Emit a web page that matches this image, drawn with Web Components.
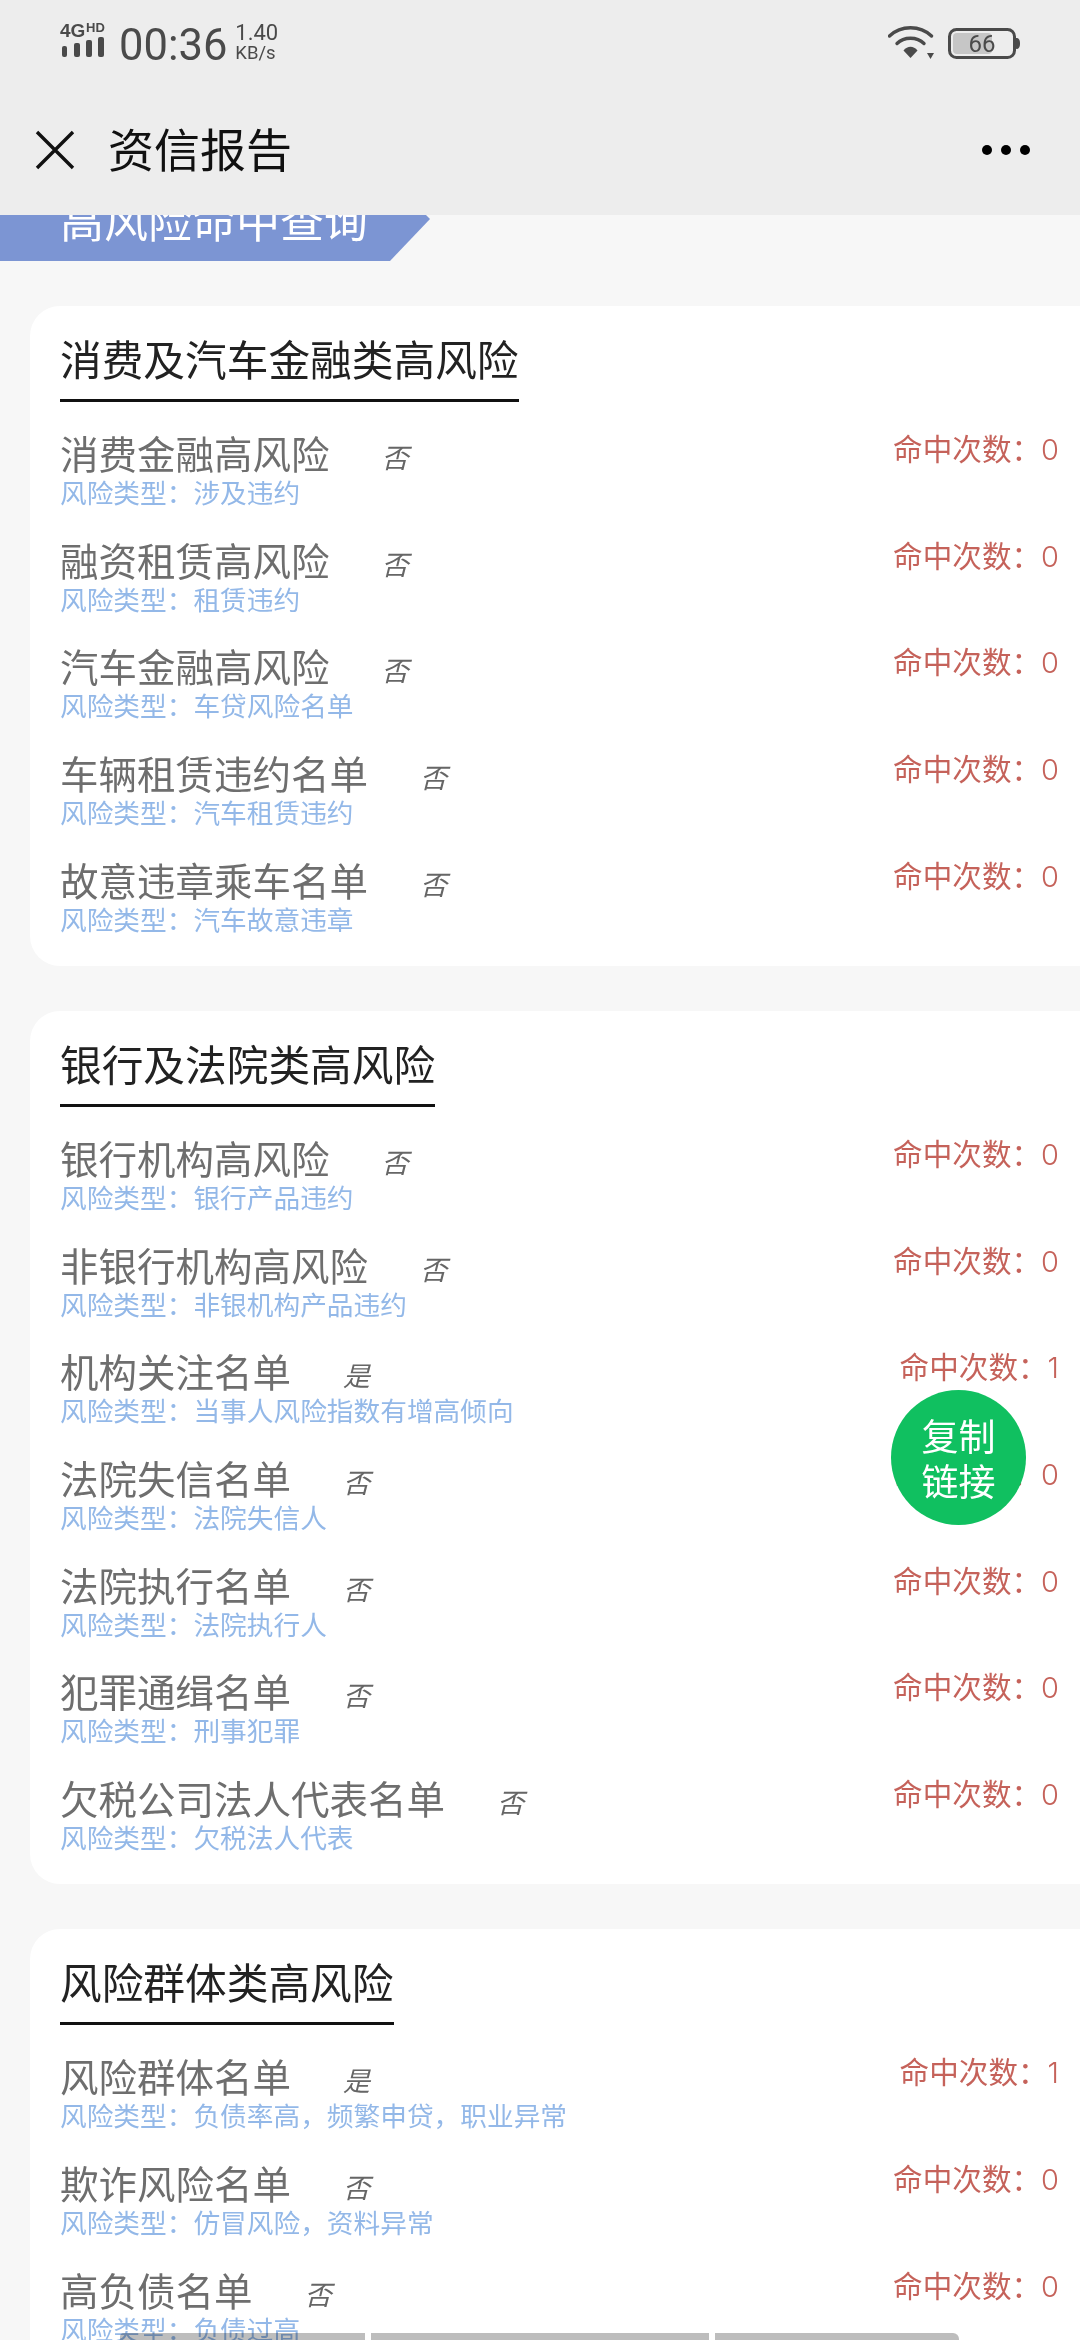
<!DOCTYPE html>
<html lang="zh">
<head>
<meta charset="utf-8">
<title>资信报告</title>
<style>
  html, body { margin: 0; padding: 0; height: 2340px; overflow: hidden; background: #f7f7f7; }
  body { font-family: "Noto Sans CJK SC", "Liberation Sans", sans-serif; position: relative; }
</style>
</head>
<body>
<app-header></app-header>
<report-page>
  <section-ribbon slot="ribbon">高风险命中查询</section-ribbon>
  <risk-card heading="消费及汽车金融类高风险" rows='[
    ["消费金融高风险","否","涉及违约",0],
    ["融资租赁高风险","否","租赁违约",0],
    ["汽车金融高风险","否","车贷风险名单",0],
    ["车辆租赁违约名单","否","汽车租赁违约",0],
    ["故意违章乘车名单","否","汽车故意违章",0]]'></risk-card>
  <risk-card heading="银行及法院类高风险" rows='[
    ["银行机构高风险","否","银行产品违约",0],
    ["非银行机构高风险","否","非银机构产品违约",0],
    ["机构关注名单","是","当事人风险指数有增高倾向",1],
    ["法院失信名单","否","法院失信人",0],
    ["法院执行名单","否","法院执行人",0],
    ["犯罪通缉名单","否","刑事犯罪",0],
    ["欠税公司法人代表名单","否","欠税法人代表",0]]'></risk-card>
  <risk-card heading="风险群体类高风险" rows='[
    ["风险群体名单","是","负债率高，频繁申贷，职业异常",1],
    ["欺诈风险名单","否","仿冒风险，资料异常",0],
    ["高负债名单","否","负债过高",0]]'></risk-card>
</report-page>
<copy-fab>复制<br>链接</copy-fab>
<scroll-bars></scroll-bars>

<script>
const FONT = '"Noto Sans CJK SC", "Liberation Sans", sans-serif';

class AppHeader extends HTMLElement {
  constructor() {
    super();
    this.attachShadow({ mode: 'open' }).innerHTML = `
    <style>
      :host { display: block; position: absolute; top: 0; left: 0; right: 0; height: 215px; background: #ededed; z-index: 5; font-family: ${FONT}; }
      .status { height: 84px; display: flex; align-items: flex-start; padding: 0 0 0 60px; color: #4a4a4a; }
      .net { width: 48px; margin-top: 18px; }
      .time { font: 43.5px/1 Roboto, "Liberation Sans", sans-serif; margin: 24px 0 0 11px; }
      .speed { font: 18.5px/21px Roboto, "Liberation Sans", sans-serif; margin: 22px 0 0 8px; }
      .speed div:first-child { font-size: 22px; }
      .right { margin-left: auto; display: flex; align-items: flex-start; margin-right: 60px; margin-top: 26px; gap: 14px; }
      .battery { margin-top: 2px; }
      .bar { height: 131px; display: flex; align-items: center; padding: 0 50px 0 34px; box-sizing: border-box; }
      .close { width: 42px; height: 42px; }
      h1 { margin: -5px 0 0 32px; font-size: 46px; font-weight: 400; color: #111; line-height: 60px; flex: 1; }
      .dots { display: flex; gap: 9px; }
      .dots i { width: 10px; height: 10px; border-radius: 50%; background: #000; }
    </style>
    <div class="status">
      <svg class="net" viewBox="0 -4 48 40" height="40">
        <text x="0" y="15" font-family="Liberation Sans" font-weight="700" font-size="19" fill="#4a4a4a">4G</text>
        <text x="26" y="10" font-family="Liberation Sans" font-weight="700" font-size="13" fill="#4a4a4a">HD</text>
        <rect x="2" y="24" width="5" height="11" rx="2" fill="#4a4a4a"/>
        <rect x="14" y="21" width="6" height="14" rx="2" fill="#4a4a4a"/>
        <rect x="26" y="18" width="6" height="17" rx="2" fill="#4a4a4a"/>
        <rect x="38" y="15" width="6" height="20" rx="2" fill="#4a4a4a"/>
      </svg>
      <div class="time">00:36</div>
      <div class="speed"><div>1.40</div><div>KB/s</div></div>
      <div class="right">
        <svg width="46" height="34" viewBox="0 0 46 34" fill="none" stroke="#4a4a4a" stroke-width="3.4" stroke-linecap="round">
          <path d="M1.500 10C13 -1 32 -1 43.500 10"/>
          <path d="M9 17.500C16 10.500 29 10.500 36 17.500"/>
          <path d="M15.500 24.500C19.500 19.500 25.500 19.500 29.500 24.500L22.500 32Z" fill="#4a4a4a" stroke="none"/>
          <path d="M39 27H46L42.500 33Z" fill="#4a4a4a" stroke="none"/>
        </svg>
        <svg class="battery" width="72" height="32" viewBox="0 0 72 32">
          <rect x="1.500" y="1.500" width="65" height="28" rx="7" fill="none" stroke="#4a4a4a" stroke-width="3"/>
          <rect x="5" y="5" width="39" height="21" rx="4" fill="#c6c6c6"/>
          <path d="M68 10c3 0 4 2 4 5.500s-1 5.500-4 5.500z" fill="#4a4a4a"/>
          <text x="34" y="24" text-anchor="middle" font-family="Roboto, Liberation Sans" font-size="24" fill="#4a4a4a">66</text>
        </svg>
      </div>
    </div>
    <div class="bar">
      <svg class="close" viewBox="0 0 42 42" stroke="#111" stroke-width="3.4" fill="none"><path d="M3 3L39 39M39 3L3 39"/></svg>
      <h1>资信报告</h1>
      <div class="dots"><i></i><i></i><i></i></div>
    </div>`;
  }
}

class ReportPage extends HTMLElement {
  constructor() {
    super();
    this.attachShadow({ mode: 'open' }).innerHTML = `
    <style>
      :host { display: block; position: absolute; top: 195px; left: 0; width: 1080px; font-family: ${FONT}; }
      .cards { display: flex; flex-direction: column; gap: 45px; margin: 45px 0 0 30px; }
    </style>
    <slot name="ribbon"></slot>
    <div class="cards"><slot></slot></div>`;
  }
}

class SectionRibbon extends HTMLElement {
  constructor() {
    super();
    this.attachShadow({ mode: 'open' }).innerHTML = `
    <style>
      :host { display: block; width: 430px; height: 66px; background: #7c95d3; color: #fff; font-size: 44px; line-height: 48px; box-sizing: border-box; padding-left: 60px; clip-path: polygon(0 0, 406px 0, 430px 24px, 390px 100%, 0 100%); }
    </style>
    <slot></slot>`;
  }
}

class RiskRow extends HTMLElement {
  constructor() {
    super();
    this.attachShadow({ mode: 'open' }).innerHTML = `
    <style>
      :host { display: flex; justify-content: space-between; height: 106.7px; }
      .name { font-size: 38.5px; line-height: 46px; color: #6e6e6e; display: flex; align-items: flex-end; height: 46px; margin-top: -1px; }
      .flag { font-size: 27px; line-height: 32px; font-style: italic; color: #666; margin-left: 52px; transform: translateY(-2px); }
      .type { font-size: 26.7px; line-height: 34px; color: #93b8e8; margin-top: 0; }
      .hits { font-size: 29.6px; line-height: 38px; color: #c5625a; margin-top: -1px; white-space: nowrap; padding-right: 21px; display: flex; align-items: baseline; }
      .hits b { font: 300 29px/38px Inter, "Liberation Sans", sans-serif; }
    </style>
    <div>
      <div class="name"><span id="n"></span><span class="flag" id="f"></span></div>
      <div class="type">风险类型：<span id="t"></span></div>
    </div>
    <div class="hits"><span>命中次数：</span><b id="h"></b></div>`;
  }

  set data([name, flag, type, hits]) {
    const r = this.shadowRoot;
    r.getElementById('n').textContent = name;
    r.getElementById('f').textContent = flag;
    r.getElementById('t').textContent = type;
    r.getElementById('h').textContent = hits;
  }
}

class RiskCard extends HTMLElement {
  constructor() {
    super();
    this.attachShadow({ mode: 'open' }).innerHTML = `
    <style>
      :host { display: block; background: #fff; border-radius: 30px 0 0 30px; padding: 24px 0 2.5px 30px; }
      .head { display: inline-block; font-size: 41.7px; line-height: 56px; color: #222; border-bottom: 3px solid #111; padding-bottom: 13px; margin-bottom: 28px; vertical-align: top; }
      .rows { display: block; }
    </style>
    <div class="head" id="head"></div>
    <div class="rows" id="rows"></div>`;
  }

  connectedCallback() {
    this.shadowRoot.getElementById('head').textContent = this.getAttribute('heading');
    const box = this.shadowRoot.getElementById('rows');
    JSON.parse(this.getAttribute('rows')).forEach(d => {
      const row = document.createElement('risk-row');
      row.data = d;
      box.appendChild(row);
    });
  }
}

class CopyFab extends HTMLElement {
  constructor() {
    super();
    this.attachShadow({ mode: 'open' }).innerHTML = `
    <style>
      :host { position: absolute; left: 891px; top: 1390px; width: 135px; height: 135px; border-radius: 50%; background: #10c060; color: #fff; font-size: 37px; line-height: 45px; display: flex; align-items: center; justify-content: center; text-align: center; z-index: 4; font-family: ${FONT}; }
    </style>
    <div><slot></slot></div>`;
  }
}

class ScrollBars extends HTMLElement {
  constructor() {
    super();
    this.attachShadow({ mode: 'open' }).innerHTML = `
    <style>
      :host { position: absolute; left: 120px; bottom: 0; height: 7px; display: flex; gap: 6px; z-index: 6; mix-blend-mode: multiply; }
      i { background: #bdbdbd; }
      i:nth-of-type(1) { width: 245px; border-radius: 4px 0 0 0; }
      i:nth-of-type(2) { width: 338px; }
      i:nth-of-type(3) { width: 244px; border-radius: 0 6px 0 0; }
    </style>
    <i></i><i></i><i></i>`;
  }
}

customElements.define('app-header', AppHeader);
customElements.define('report-page', ReportPage);
customElements.define('section-ribbon', SectionRibbon);
customElements.define('risk-row', RiskRow);
customElements.define('risk-card', RiskCard);
customElements.define('copy-fab', CopyFab);
customElements.define('scroll-bars', ScrollBars);
</script>
</body>
</html>
